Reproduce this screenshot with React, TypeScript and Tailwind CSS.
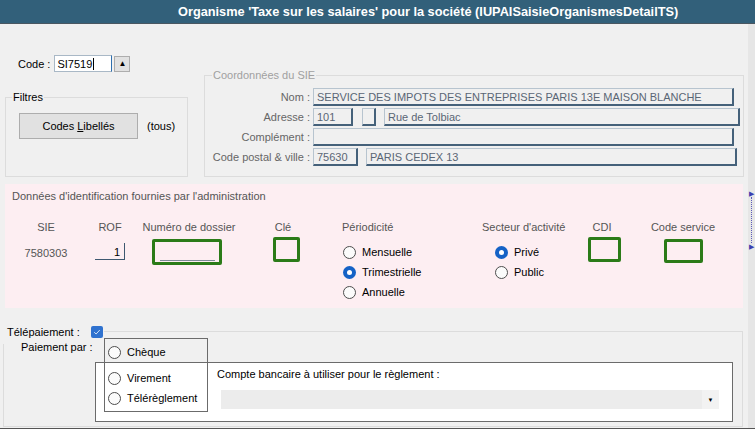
import React from "react";

const Radio = ({ checked, label }: { checked?: boolean; label: string }) => (
  <div className="flex items-center gap-[6px] h-[20px]">
    {checked ? (
      <span className="w-[13px] h-[13px] rounded-full bg-[#1562c6] flex items-center justify-center shrink-0">
        <span className="w-[5px] h-[5px] rounded-full bg-white" />
      </span>
    ) : (
      <span className="w-[13px] h-[13px] rounded-full border border-[#4d4d4d] bg-[#fbfbfb] shrink-0" />
    )}
    <span className="text-black whitespace-nowrap">{label}</span>
  </div>
);

const SieField = ({ value, w }: { value?: string; w: string }) => (
  <div
    className={`${w} h-[18px] flex items-center pl-[3px] text-[#5a6675] border-t border-l border-r-2 border-b-2 border-t-[#b7c4cf] border-l-[#b7c4cf] border-r-[#45617a] border-b-[#45617a] whitespace-nowrap overflow-hidden`}
  >
    {value}
  </div>
);

const GreenBox = ({ w, h, line }: { w: string; h: string; line?: boolean }) => (
  <div className={`${w} ${h} border-[3px] border-[#2b7b18] rounded-[2px] flex items-end justify-center pb-[1px]`}>
    {line && <div className="w-[55px] border-b border-[#7c8a96]" />}
  </div>
);

export default function App() {
  return (
    <div
      className="w-[755px] h-[435px] bg-[#f0f0f0] overflow-hidden flex flex-col text-[11px] leading-[14px] text-[#222]"
      style={{ fontFamily: '"Liberation Sans", Arial, sans-serif' }}
    >
      {/* title bar */}
      <div className="h-[24px] shrink-0 bg-[#32607a] border-b border-[#4a5761] flex items-center pl-[178px]">
        <span className="text-white font-bold text-[12.75px] whitespace-nowrap">
          Organisme 'Taxe sur les salaires' pour la société (IUPAISaisieOrganismesDetailTS)
        </span>
      </div>

      <div className="flex h-[404px] shrink-0">
        <div className="w-[748px] flex flex-col">
          {/* top part */}
          <div className="flex">
            <div className="w-[204px] flex flex-col">
              <div className="mt-[31px] flex items-center h-[17px]">
                <span className="ml-[18px] text-black">Code :</span>
                <div className="ml-[4px] w-[58px] h-[17px] bg-white border border-[#a9b8c6] border-r-[#2f6fae] flex items-center pl-[2px] text-black">
                  SI7519<span className="w-px h-[12px] bg-black ml-[1px]" />
                </div>
                <div className="ml-[2px] w-[16px] h-[16px] bg-[#e1e1e1] border border-[#adadad] flex items-center justify-center">
                  <span className="text-[8px] leading-none text-black">▲</span>
                </div>
              </div>
              <fieldset className="mt-[18px] ml-[5px] w-[183px] h-[87px] border border-[#dcdcdc]">
                <legend className="ml-[6px] px-[1px] text-black">Filtres</legend>
                <div className="flex items-center mt-[9px] ml-[13px]">
                  <div className="w-[119px] h-[26px] bg-[#e1e1e1] border border-[#adadad] flex items-center justify-center text-black">
                    Codes <span className="underline ml-[3px]">L</span>ibellés
                  </div>
                  <span className="ml-[9px] text-black">(tous)</span>
                </div>
              </fieldset>
            </div>

            <fieldset className="mt-[44px] w-[540px] h-[109px] border border-[#dcdcdc]">
              <legend className="ml-[7px] px-[1px] text-[#a0a0a0]">Coordonnées du SIE</legend>
              <div className="mt-[6px] flex flex-col gap-[2px]">
                <div className="flex items-center gap-[3px]">
                  <span className="w-[105px] text-right text-[#666]">Nom :</span>
                  <SieField w="w-[421px]" value="SERVICE DES IMPOTS DES ENTREPRISES PARIS 13E MAISON BLANCHE" />
                </div>
                <div className="flex items-center gap-[3px]">
                  <span className="w-[105px] text-right text-[#666]">Adresse :</span>
                  <SieField w="w-[40px]" value="101" />
                  <div className="w-[3px]" />
                  <SieField w="w-[14px]" />
                  <div className="w-[2px]" />
                  <SieField w="w-[356px]" value="Rue de Tolbiac" />
                </div>
                <div className="flex items-center gap-[3px]">
                  <span className="w-[105px] text-right text-[#666]">Complément :</span>
                  <SieField w="w-[421px]" />
                </div>
                <div className="flex items-center gap-[3px]">
                  <span className="w-[105px] text-right text-[#666]">Code postal &amp; ville :</span>
                  <SieField w="w-[45px]" value="75630" />
                  <div className="w-[2px]" />
                  <SieField w="w-[371px]" value="PARIS CEDEX 13" />
                </div>
              </div>
            </fieldset>
          </div>

          {/* pink identification block */}
          <div className="mt-[7px] ml-[5px] w-[738px] h-[124px] bg-[#fdeef2] flex flex-col text-[#555]">
            <div className="mt-[5px] ml-[7px]">Données d'identification fournies par l'administration</div>
            <div className="mt-[17px] flex">
              <div className="w-[82px] flex flex-col items-center">
                <span>SIE</span>
                <span className="mt-[12px]">7580303</span>
              </div>
              <div className="w-[46px] flex flex-col items-center">
                <span>ROF</span>
                <div className="mt-[9px] w-[30px] h-[17px] border-r border-b border-[#3e5870] flex items-end justify-end pr-[4px] text-black">
                  1
                </div>
              </div>
              <div className="w-[112px] flex flex-col items-center">
                <span>Numéro de dossier</span>
                <div className="mt-[5px] mr-[4px]">
                  <GreenBox w="w-[70px]" h="h-[26px]" line />
                </div>
              </div>
              <div className="w-[76px] flex flex-col items-center">
                <span>Clé</span>
                <div className="mt-[3px] ml-[6px]">
                  <GreenBox w="w-[27px]" h="h-[25px]" />
                </div>
              </div>
              <div className="w-[161px] flex flex-col pl-[21px]">
                <span>Périodicité</span>
                <div className="mt-[8px] flex flex-col ml-[1px]">
                  <Radio label="Mensuelle" />
                  <Radio label="Trimestrielle" checked />
                  <Radio label="Annuelle" />
                </div>
              </div>
              <div className="w-[90px] flex flex-col">
                <span className="whitespace-nowrap">Secteur d'activité</span>
                <div className="mt-[8px] flex flex-col ml-[13px]">
                  <Radio label="Privé" checked />
                  <Radio label="Public" />
                </div>
              </div>
              <div className="w-[60px] flex flex-col items-center">
                <span>CDI</span>
                <div className="mt-[3px] ml-[4px]">
                  <GreenBox w="w-[33px]" h="h-[25px]" />
                </div>
              </div>
              <div className="w-[102px] flex flex-col items-center">
                <span>Code service</span>
                <div className="mt-[5px]">
                  <GreenBox w="w-[39px]" h="h-[24px]" />
                </div>
              </div>
            </div>
          </div>

          {/* télépaiement */}
          <div className="mt-[23px] ml-[3px] w-[740px] h-[96px] border border-[#dcdcdc] relative">
            <div className="absolute left-[-1px] top-[-7px] w-[101px] h-[19px] bg-[#f0f0f0] flex items-start justify-between pr-[1px]">
              <span className="ml-[4px] text-black whitespace-nowrap">Télépaiement :</span>
              <span className="mt-[1px] w-[12px] h-[12px] shrink-0 rounded-[2px] bg-[#2f72cf] flex items-center justify-center">
                <svg width="8" height="8" viewBox="0 0 8 8">
                  <path d="M1.2 4.2 L3.1 6 L6.8 2" stroke="#cfe0f5" strokeWidth="1" fill="none" />
                </svg>
              </span>
            </div>
            <div className="relative mt-[8px] ml-[17px] text-black">Paiement par :</div>
            <div className="mt-[8px] ml-[91px] w-[638px] h-[60px] bg-white border border-[#6b6b6b] text-black">
              <div className="mt-[4px] ml-[121px]">Compte bancaire à utiliser pour le règlement :</div>
              <div className="mt-[9px] ml-[125px] w-[498px] h-[19px] bg-[#ececec] flex justify-end">
                <div className="w-[17px] h-full bg-[#f2f2f2] flex items-center justify-center">
                  <span className="text-[6px] leading-none text-black">▼</span>
                </div>
              </div>
            </div>
            <div className="absolute left-[100px] top-[6px] w-[104px] h-[74px] border border-[#6b6b6b] flex flex-col pt-[3px] pl-[3px]">
              <Radio label="Chèque" />
              <div className="mt-[6px]">
                <Radio label="Virement" />
                <Radio label="Télérèglement" />
              </div>
            </div>
          </div>
        </div>

        {/* right strip */}
        <div className="w-[7px] bg-[#e6e6e6] flex flex-col items-center">
          <span className="mt-[166px] text-[7px] leading-[7px] text-[#3b3fb0]">▶</span>
          <div className="h-[46px] border-l border-dotted border-[#5b5bb8]" />
          <span className="text-[7px] leading-[7px] text-[#3b3fb0]">▶</span>
        </div>
      </div>

      <div className="flex-1 border-t border-[#555] bg-white" />
    </div>
  );
}
